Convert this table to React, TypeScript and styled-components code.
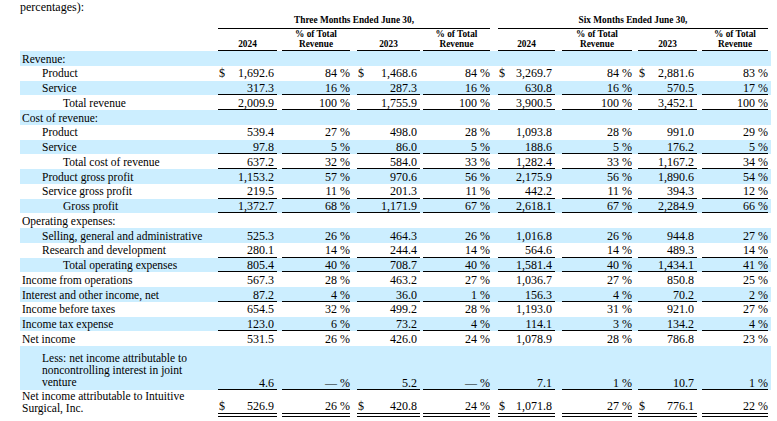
import React from "react";
import styled, { createGlobalStyle } from "styled-components";

const COLS = "198px 59px 73px 70px 70px 65px 77px 65px 71px";
const GAPS = [0, 5, 7, 3, 8, 7, 6, 5];

const GlobalStyle = createGlobalStyle`
  body {
    margin: 0;
    background: #fff;
    color: #000;
    font-family: "Liberation Serif", "Times New Roman", serif;
  }
`;

const Page = styled.div`
  padding-left: 20px;
  width: 751px;
`;

const Intro = styled.div`
  font-size: 12px;
  line-height: 14px;
  height: 14px;
`;

const HeadRow = styled.div`
  display: grid;
  grid-template-columns: ${COLS};
  align-items: end;
  padding-right: 2px;
  font-size: 9.3px;
  font-weight: bold;
  text-align: center;
`;

const GroupCell = styled.div<{ $gap: number }>`
  grid-column: span 4;
  padding-left: ${(p) => p.$gap}px;
`;

const GroupTitle = styled.div`
  line-height: 11px;
  padding: 1px 0 2px;
  border-bottom: 1px solid #000;
`;

const HeadCell = styled.div<{ $gap: number }>`
  padding-left: ${(p) => p.$gap}px;
`;

const HeadTitle = styled.div`
  line-height: 9.5px;
  padding: 1px 0 1px;
  border-bottom: 1px solid #000;
`;

const Row = styled.div<{ $shade: boolean }>`
  display: grid;
  grid-template-columns: ${COLS};
  align-items: end;
  padding-right: 2px;
  font-size: 12px;
  background: ${(p) => (p.$shade ? "#cceeff" : "transparent")};
`;

const Label = styled.div<{ $level: number; $top: number; $bottom: number }>`
  align-self: start;
  font-size: 11.5px;
  line-height: 12px;
  padding: ${(p) => p.$top}px 0 ${(p) => p.$bottom}px
    ${(p) => [2, 22, 43][p.$level]}px;
`;

const Cell = styled.div<{ $gap: number }>`
  padding-left: ${(p) => p.$gap}px;
`;

const Value = styled.div<{ $rule?: "single" | "double"; $pct: boolean }>`
  display: flex;
  justify-content: ${(p) => (p.$pct ? "flex-end" : "space-between")};
  line-height: 12px;
  padding: 1.5px ${(p) => (p.$pct ? 0 : 3)}px
    ${(p) => (p.$rule === "double" ? 1.5 : 0.25)}px 1px;
  border-bottom: ${(p) =>
    p.$rule === "double"
      ? "4px double #000"
      : p.$rule === "single"
      ? "1px solid #000"
      : "1px solid transparent"};
  white-space: nowrap;
`;

type Line = {
  label: React.ReactNode;
  level: 0 | 1 | 2;
  v?: string[];
  dollar?: boolean;
  rule?: "single" | "double";
  top?: number;
  bottom?: number;
};

const lines: Line[] = [
  { label: "Revenue:", level: 0 },
  { label: "Product", level: 1, dollar: true, v: ["1,692.6", "84", "1,468.6", "84", "3,269.7", "84", "2,881.6", "83"] },
  { label: "Service", level: 1, rule: "single", v: ["317.3", "16", "287.3", "16", "630.8", "16", "570.5", "17"] },
  { label: "Total revenue", level: 2, rule: "single", v: ["2,009.9", "100", "1,755.9", "100", "3,900.5", "100", "3,452.1", "100"] },
  { label: "Cost of revenue:", level: 0 },
  { label: "Product", level: 1, v: ["539.4", "27", "498.0", "28", "1,093.8", "28", "991.0", "29"] },
  { label: "Service", level: 1, rule: "single", v: ["97.8", "5", "86.0", "5", "188.6", "5", "176.2", "5"] },
  { label: "Total cost of revenue", level: 2, rule: "single", v: ["637.2", "32", "584.0", "33", "1,282.4", "33", "1,167.2", "34"] },
  { label: "Product gross profit", level: 1, v: ["1,153.2", "57", "970.6", "56", "2,175.9", "56", "1,890.6", "54"] },
  { label: "Service gross profit", level: 1, rule: "single", v: ["219.5", "11", "201.3", "11", "442.2", "11", "394.3", "12"] },
  { label: "Gross profit", level: 2, rule: "single", v: ["1,372.7", "68", "1,171.9", "67", "2,618.1", "67", "2,284.9", "66"] },
  { label: "Operating expenses:", level: 0 },
  { label: "Selling, general and administrative", level: 1, v: ["525.3", "26", "464.3", "26", "1,016.8", "26", "944.8", "27"] },
  { label: "Research and development", level: 1, rule: "single", v: ["280.1", "14", "244.4", "14", "564.6", "14", "489.3", "14"] },
  { label: "Total operating expenses", level: 2, rule: "single", v: ["805.4", "40", "708.7", "40", "1,581.4", "40", "1,434.1", "41"] },
  { label: "Income from operations", level: 0, v: ["567.3", "28", "463.2", "27", "1,036.7", "27", "850.8", "25"] },
  { label: "Interest and other income, net", level: 0, rule: "single", v: ["87.2", "4", "36.0", "1", "156.3", "4", "70.2", "2"] },
  { label: "Income before taxes", level: 0, v: ["654.5", "32", "499.2", "28", "1,193.0", "31", "921.0", "27"] },
  { label: "Income tax expense", level: 0, rule: "single", v: ["123.0", "6", "73.2", "4", "114.1", "3", "134.2", "4"] },
  { label: "Net income", level: 0, v: ["531.5", "26", "426.0", "24", "1,078.9", "28", "786.8", "23"] },
  {
    label: (
      <>
        Less: net income attributable to
        <br />
        noncontrolling interest in joint
        <br />
        venture
      </>
    ),
    level: 1,
    rule: "single",
    top: 5.5,
    bottom: 2.5,
    v: ["4.6", "\u2014", "5.2", "\u2014", "7.1", "1", "10.7", "1"],
  },
  {
    label: (
      <>
        Net income attributable to Intuitive
        <br />
        Surgical, Inc.
      </>
    ),
    level: 0,
    rule: "double",
    dollar: true,
    top: 0,
    bottom: 3,
    v: ["526.9", "26", "420.8", "24", "1,071.8", "27", "776.1", "22"],
  },
];

const heads = ["2024", "% of Total\nRevenue", "2023", "% of Total\nRevenue", "2024", "% of Total\nRevenue", "2023", "% of Total\nRevenue"];

function App() {
  return (
    <>
      <GlobalStyle />
      <Page>
        <Intro>percentages):</Intro>
        <HeadRow>
          <div />
          <GroupCell $gap={0}>
            <GroupTitle>Three Months Ended June 30,</GroupTitle>
          </GroupCell>
          <GroupCell $gap={8}>
            <GroupTitle>Six Months Ended June 30,</GroupTitle>
          </GroupCell>
        </HeadRow>
        <HeadRow>
          <div />
          {heads.map((h, i) => (
            <HeadCell key={i} $gap={GAPS[i]}>
              <HeadTitle>
                {h.split("\n").map((t, j) => (
                  <div key={j}>{t}</div>
                ))}
              </HeadTitle>
            </HeadCell>
          ))}
        </HeadRow>
        {lines.map((l, r) => (
          <Row key={r} $shade={r % 2 === 0}>
            <Label $level={l.level} $top={l.top ?? 1.5} $bottom={l.bottom ?? 1.25}>
              {l.label}
            </Label>
            {l.v &&
              l.v.map((v, i) => {
                const pct = i % 2 === 1;
                return (
                  <Cell key={i} $gap={GAPS[i]}>
                    <Value $pct={pct} $rule={l.rule}>
                      {pct ? (
                        <span>{v} %</span>
                      ) : (
                        <>
                          <span>{l.dollar ? "$" : ""}</span>
                          <span>{v}</span>
                        </>
                      )}
                    </Value>
                  </Cell>
                );
              })}
          </Row>
        ))}
      </Page>
    </>
  );
}

export default App;
